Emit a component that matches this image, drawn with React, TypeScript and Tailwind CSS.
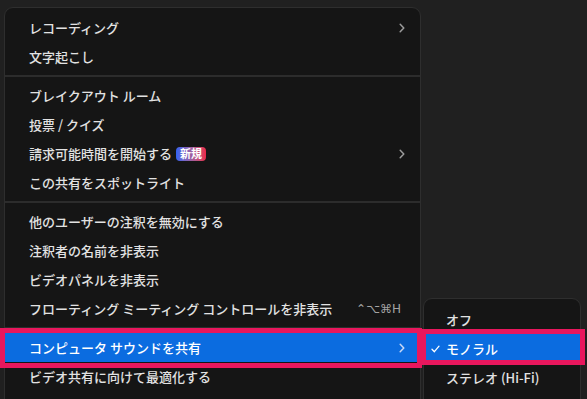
import React from "react";

const font = { fontFamily: '"Noto Sans CJK JP", "Noto Sans", sans-serif' };

function Chevron({ color = "#9b9b9b" }: { color?: string }) {
  return (
    <svg width="6" height="10" viewBox="0 0 6 10" className="shrink-0">
      <path d="M1.2 1.2L4.8 5L1.2 8.8" fill="none" stroke={color} strokeWidth="1.5" strokeLinecap="round" strokeLinejoin="round" />
    </svg>
  );
}

function Row({
  label,
  chevron,
  badge,
  shortcut,
  active,
}: {
  label: string;
  chevron?: boolean;
  badge?: boolean;
  shortcut?: string;
  active?: boolean;
}) {
  return (
    <div
      className={`flex h-[29px] items-center pl-[24px] pr-[15px] ${active ? "bg-[#0b6ce0] text-white" : "text-[#e2e2e2]"}`}
    >
      <span className="text-[13px] font-medium leading-none tracking-[0px]">{label}</span>
      {badge && (
        <span className="ml-[4px] flex h-[14px] items-center rounded-[4px] bg-gradient-to-r from-[#2f62f2] to-[#ea2447] px-[4px] text-[11px] font-bold leading-none text-white">
          新規
        </span>
      )}
      <div className="flex-1" />
      {shortcut && (
        <span
          className="mr-[4px] text-[12px] leading-none text-[#a3a3a3]"
          style={{ fontFamily: '"DejaVu Sans", "Liberation Sans", sans-serif' }}
        >
          {shortcut}
        </span>
      )}
      {chevron && <Chevron color={active ? "#c8d8f5" : "#9b9b9b"} />}
    </div>
  );
}

function Sep() {
  return <div className="h-[2px] bg-[#2c2c2c]" />;
}

export default function App() {
  return (
    <div className="relative h-[399px] w-[587px] overflow-hidden bg-[#202020]" style={font}>
      <div className="pl-[4px] pt-[7px]">
        <div className="h-[420px] w-[417px] rounded-t-[9px] border border-[#2e2e2e] bg-[#151515]">
          <div className="pb-[4px] pt-[5px]">
            <Row label="レコーディング" chevron />
            <Row label="文字起こし" />
          </div>
          <Sep />
          <div className="py-[4px]">
            <Row label="ブレイクアウト ルーム" />
            <Row label="投票 / クイズ" />
            <Row label="請求可能時間を開始する" badge chevron />
            <Row label="この共有をスポットライト" />
          </div>
          <Sep />
          <div className="py-[4px]">
            <Row label="他のユーザーの注釈を無効にする" />
            <Row label="注釈者の名前を非表示" />
            <Row label="ビデオパネルを非表示" />
            <Row label="フローティング ミーティング コントロールを非表示" shortcut="⌃⌥⌘H" />
          </div>
          <Sep />
          <div className="py-[4px]">
            <Row label="コンピュータ サウンドを共有" chevron active />
            <Row label="ビデオ共有に向けて最適化する" />
          </div>
        </div>
      </div>

      {/* submenu */}
      <div className="absolute left-[423px] top-[298px] h-[120px] w-[158px] rounded-t-[9px] border border-[#2e2e2e] bg-[#151515] pt-[6px]">
        <div className="flex h-[29px] items-center pl-[22px] text-[13px] font-medium text-[#e2e2e2]">オフ</div>
        <div className="flex h-[29px] items-center bg-[#0b6ce0] pl-[7px] text-[13px] font-medium text-white">
          <svg width="9" height="8" viewBox="0 0 9 8" className="mr-[6px]">
            <path d="M1 4.3L3.4 6.7L8 1.2" fill="none" stroke="#ffffff" strokeWidth="1.3" strokeLinecap="round" strokeLinejoin="round" />
          </svg>
          モノラル
        </div>
        <div className="flex h-[29px] items-center pl-[22px] text-[13px] font-medium text-[#e2e2e2]">ステレオ (Hi-Fi)</div>
      </div>

      {/* annotation boxes */}
      <div className="pointer-events-none absolute left-[0px] top-[328px] h-[40px] w-[422px] border-[5px] border-[#e8175d]" />
      <div className="pointer-events-none absolute left-[421px] top-[329px] h-[36px] w-[164px] border-[5px] border-[#e8175d]" />
    </div>
  );
}
